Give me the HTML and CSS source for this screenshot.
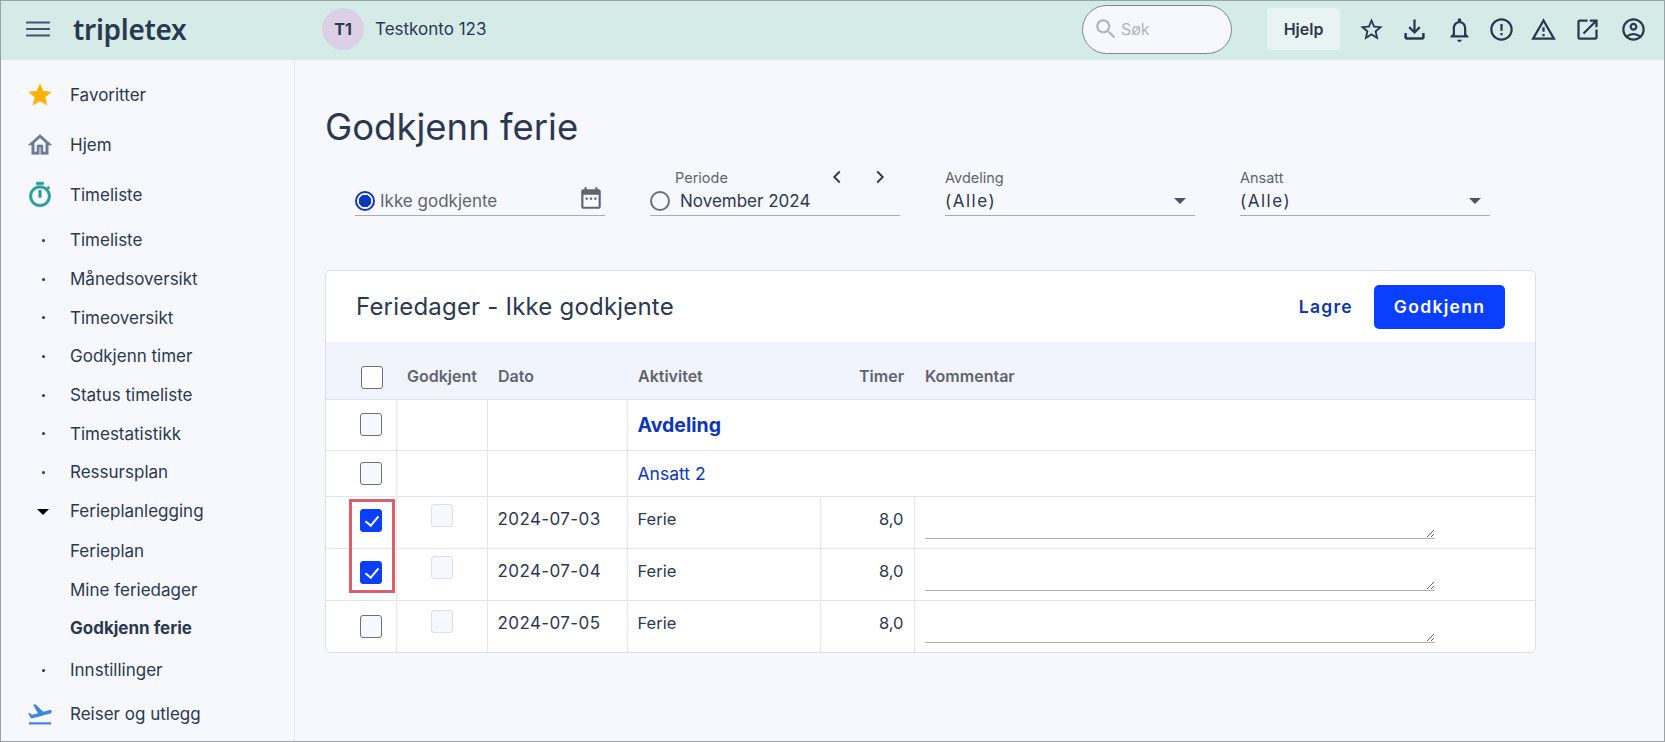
FILE: index.html
```html
<!DOCTYPE html>
<html lang="no">

<head>
    <meta charset="UTF-8">
    <title>Godkjenn ferie</title>
    <link rel="stylesheet" href="styles.css">
</head>

<body>
    <div class="app">
        <header class="topbar">
            <svg class="menu-icon" viewBox="0 0 24 24"><path d="M1 19h22v-2H1v2zm0-6h22v-2H1v2zm0-8v2h22V5H1z"/></svg>
            <span class="logo">tripletex</span>
            <span class="avatar">T1</span>
            <span class="company">Testkonto 123</span>
            <div class="search">
                <svg class="search-icon" viewBox="0 0 24 24"><path d="M15.5 14h-.79l-.28-.27C15.41 12.59 16 11.11 16 9.5 16 5.91 13.09 3 9.5 3S3 5.91 3 9.5 5.91 16 9.5 16c1.61 0 3.09-.59 4.23-1.57l.27.28v.79l5 4.99L20.49 19l-4.99-5zm-6 0C7.01 14 5 11.99 5 9.5S7.01 5 9.5 5 14 7.01 14 9.5 11.99 14 9.5 14z"/></svg>
                <span>Søk</span>
            </div>
            <button class="help">Hjelp</button>
            <div class="tools">
                <svg viewBox="0 0 24 24"><path d="M22 9.24l-7.19-.62L12 2 9.19 8.63 2 9.24l5.46 4.73L5.82 21 12 17.27 18.18 21l-1.63-7.03L22 9.24zM12 15.4l-3.76 2.27 1-4.28-3.32-2.88 4.38-.38L12 6.1l1.71 4.04 4.38.38-3.32 2.88 1 4.28L12 15.4z"/></svg>
                <svg viewBox="0 0 24 24"><path d="M11 3h2v9.2l3-3 1.4 1.4-5.4 5.4-5.4-5.4L8 9.2l3 3V3zM3 15h2.2v3.2c0 .4.3.6.6.6h12.4c.4 0 .6-.2.6-.6V15H21v4c0 1.1-.9 2-2 2H5c-1.100 0-2-.9-2-2v-4z"/></svg>
                <svg viewBox="0 0 24 24"><path d="M12 23c1.100 0 2-.9 2-2h-4c0 1.100.9 2 2 2zm6-7v-5c0-3.070-1.630-5.640-4.500-6.320V3.500c0-.83-.67-1.500-1.500-1.500s-1.500.67-1.500 1.500v1.180C7.640 5.360 6 7.920 6 11v5l-2 2v1h16v-1l-2-2zm-2 1H8v-6c0-2.480 1.510-4.500 4-4.500s4 2.020 4 4.500v6z"/></svg>
                <svg viewBox="0 0 24 24"><path d="M11 15h2v2h-2zm0-8h2v6h-2zm.99-5C6.470 2 2 6.480 2 12s4.470 10 9.990 10C17.520 22 22 17.520 22 12S17.520 2 11.990 2zM12 20c-4.420 0-8-3.580-8-8s3.580-8 8-8 8 3.580 8 8-3.580 8-8 8z"/></svg>
                <svg viewBox="0 0 24 24"><path d="M12 5.990L19.530 19H4.470L12 5.990M12 2L1 21h22L12 2zm1 14h-2v2h2v-2zm0-6h-2v4h2v-4z"/></svg>
                <svg viewBox="0 0 24 24"><path d="M19 19H5V5h7V3H5a2 2 0 0 0-2 2v14a2 2 0 0 0 2 2h14c1.100 0 2-.9 2-2v-7h-2v7zM14 3v2h3.590l-9.830 9.830 1.410 1.410L19 6.410V10h2V3h-7z"/></svg>
                <svg viewBox="0 0 24 24"><path d="M12 2C6.480 2 2 6.480 2 12s4.480 10 10 10 10-4.480 10-10S17.520 2 12 2zM7.350 18.500C8.660 17.560 10.260 17 12 17s3.340.56 4.650 1.500c-1.310.94-2.910 1.500-4.650 1.500s-3.340-.56-4.650-1.500zm10.790-1.380C16.450 15.800 14.320 15 12 15s-4.450.8-6.140 2.120C4.700 15.730 4 13.950 4 12c0-4.420 3.580-8 8-8s8 3.580 8 8c0 1.950-.7 3.730-1.860 5.120zM12 6c-1.930 0-3.500 1.570-3.500 3.500S10.070 13 12 13s3.500-1.570 3.500-3.500S13.930 6 12 6zm0 5c-.83 0-1.500-.67-1.500-1.500S11.170 8 12 8s1.500.67 1.500 1.500S12.830 11 12 11z"/></svg>
            </div>
        </header>

        <div class="layout">
            <nav class="sidebar">
                <a class="nav-top">
                    <svg class="star" viewBox="0 0 24 24"><path d="M12 17.270L18.180 21l-1.640-7.030L22 9.240l-7.190-.61L12 2 9.190 8.630 2 9.240l5.460 4.730L5.820 21z"/></svg>
                    Favoritter
                </a>
                <a class="nav-top">
                    <svg class="home" viewBox="0 0 24 24"><path d="M12 5.690l5 4.500V18h-2.500v-6h-5v6H7v-7.810l5-4.500M12 3L2 12h3v8h6.300v-6h1.400v6H19v-8h3L12 3z"/></svg>
                    Hjem
                </a>
                <a class="nav-top">
                    <svg class="timer" viewBox="0 0 24 24"><path d="M15 1H9v2h6V1zm-4 13h2V8h-2v6zm8.030-6.610l1.420-1.420c-.43-.51-.9-.99-1.410-1.410l-1.420 1.420C16.070 4.740 14.120 4 12 4c-4.970 0-9 4.030-9 9s4.020 9 9 9 9-4.030 9-9c0-2.120-.74-4.070-1.970-5.610zM12 20c-3.870 0-7-3.130-7-7s3.130-7 7-7 7 3.130 7 7-3.130 7-7 7z"/></svg>
                    Timeliste
                </a>
                <a class="nav-sub dot">Timeliste</a>
                <a class="nav-sub dot">Månedsoversikt</a>
                <a class="nav-sub dot">Timeoversikt</a>
                <a class="nav-sub dot">Godkjenn timer</a>
                <a class="nav-sub dot">Status timeliste</a>
                <a class="nav-sub dot">Timestatistikk</a>
                <a class="nav-sub dot">Ressursplan</a>
                <a class="nav-sub caret">Ferieplanlegging</a>
                <a class="nav-sub plan">Ferieplan</a>
                <a class="nav-sub">Mine feriedager</a>
                <a class="nav-sub current">Godkjenn ferie</a>
                <a class="nav-sub dot settings">Innstillinger</a>
                <a class="nav-top">
                    <svg class="plane" viewBox="0 0 24 24"><path d="M2.500 19h19v2h-19v-2zm19.570-9.360c-.21-.8-1.040-1.280-1.840-1.060L14.920 10l-6.900-6.430-1.930.51 4.140 7.170-4.970 1.330-1.970-1.540-1.450.39 2.590 4.490s7.120-1.900 16.570-4.430c.81-.23 1.280-1.050 1.070-1.850z"/></svg>
                    Reiser og utlegg
                </a>
            </nav>

            <main class="content">
                <h1>Godkjenn ferie</h1>

                <div class="filters">
                    <div class="field">
                        <span class="radio checked"></span>
                        <span class="field-muted">Ikke godkjente</span>
                        <svg class="calendar" viewBox="0 0 24 24"><path d="M19 4h-1V2h-2v2H8V2H6v2H5c-1.100 0-2 .9-2 2v14c0 1.100.9 2 2 2h14c1.100 0 2-.9 2-2V6c0-1.100-.9-2-2-2zm0 16H5V9h14v11zM7 11.500h2v2H7zm4 0h2v2h-2zm4 0h2v2h-2z"/></svg>
                    </div>
                    <div class="field">
                        <span class="radio"></span>
                        <span class="period-value">November 2024</span>
                        <span class="field-label period-label">Periode</span>
                        <svg class="chevron prev" viewBox="0 0 24 24"><path d="M15 6l-6 6 6 6"/></svg>
                        <svg class="chevron next" viewBox="0 0 24 24"><path d="M9 6l6 6-6 6"/></svg>
                    </div>
                    <div class="field field-select">
                        <span class="field-label">Avdeling</span>
                        <span class="select-value">(Alle)</span>
                    </div>
                    <div class="field field-select">
                        <span class="field-label">Ansatt</span>
                        <span class="select-value">(Alle)</span>
                    </div>
                </div>

                <section class="card">
                    <div class="card-head">
                        <h2>Feriedager - Ikke godkjente</h2>
                        <div class="card-actions">
                            <button class="btn-link">Lagre</button>
                            <button class="btn-primary">Godkjenn</button>
                        </div>
                    </div>

                    <table class="vacation">
                        <colgroup>
                            <col class="c-check">
                            <col class="c-ok">
                            <col class="c-date">
                            <col class="c-act">
                            <col class="c-hours">
                            <col>
                        </colgroup>
                        <thead>
                            <tr>
                                <th class="cell-check"><span class="box"></span></th>
                                <th>Godkjent</th>
                                <th>Dato</th>
                                <th>Aktivitet</th>
                                <th class="right">Timer</th>
                                <th>Kommentar</th>
                            </tr>
                        </thead>
                        <tbody>
                            <tr class="row-dept">
                                <td class="cell-check"><span class="box"></span></td>
                                <td></td>
                                <td></td>
                                <td colspan="3" class="dept">Avdeling</td>
                            </tr>
                            <tr class="row-emp">
                                <td class="cell-check"><span class="box"></span></td>
                                <td></td>
                                <td></td>
                                <td colspan="3" class="emp">Ansatt 2</td>
                            </tr>
                            <tr class="row-day">
                                <td class="cell-check"><span class="box on"></span></td>
                                <td class="cell-ok"><span class="box off"></span></td>
                                <td class="cell-date">2024-07-03</td>
                                <td>Ferie</td>
                                <td class="right">8,0</td>
                                <td class="cell-note"><textarea></textarea></td>
                            </tr>
                            <tr class="row-day">
                                <td class="cell-check"><span class="box on"></span></td>
                                <td class="cell-ok"><span class="box off"></span></td>
                                <td class="cell-date">2024-07-04</td>
                                <td>Ferie</td>
                                <td class="right">8,0</td>
                                <td class="cell-note"><textarea></textarea></td>
                            </tr>
                            <tr class="row-day">
                                <td class="cell-check"><span class="box"></span></td>
                                <td class="cell-ok"><span class="box off"></span></td>
                                <td class="cell-date">2024-07-05</td>
                                <td>Ferie</td>
                                <td class="right">8,0</td>
                                <td class="cell-note"><textarea></textarea></td>
                            </tr>
                        </tbody>
                    </table>
                    <div class="highlight"></div>
                </section>
            </main>
        </div>
    </div>
</body>

</html>
```

FILE: styles.css
```css
* {
    box-sizing: border-box;
}

html,
body {
    margin: 0;
    padding: 0;
    height: 100%;
    overflow: hidden;
    font-family: Inter, 'Liberation Sans', sans-serif;
    font-size: 16px;
    color: #2b3850;
}

svg {
    display: block;
    fill: currentColor;
}

.app {
    height: 742px;
    display: flex;
    flex-direction: column;
    border: 1px solid #98a3a6;
    background-color: #f7f8fd;
    overflow: hidden;
}

/* top bar */
.topbar {
    flex: none;
    height: 59px;
    display: flex;
    align-items: center;
    padding-bottom: 3px;
    background-color: #d5ebe8;
}

.menu-icon {
    width: 26px;
    height: 26px;
    margin-left: 24px;
    color: #46536a;
}

.logo {
    margin-left: 22px;
    width: 114px;
    font-family: 'Noto Sans', sans-serif;
    font-size: 28px;
    font-weight: 600;
    letter-spacing: -0.3px;
    color: #2b3850;
}

.avatar {
    width: 42px;
    height: 42px;
    margin-left: 135px;
    display: flex;
    align-items: center;
    justify-content: center;
    border-radius: 50%;
    background-color: #dcd0e6;
    font-weight: 700;
    font-size: 16px;
}

.company {
    margin-left: 11px;
    font-size: 17px;
}

.search {
    margin-left: auto;
    width: 150px;
    height: 49px;
    display: flex;
    align-items: center;
    gap: 2px;
    padding-left: 10px;
    border: 1px solid #7d878c;
    border-radius: 25px;
    background-color: #f7f8fd;
    color: #b2b5c0;
    font-size: 16px;
}

.search-icon {
    width: 26px;
    height: 26px;
}

.help {
    margin-left: 35px;
    width: 73px;
    height: 42px;
    border: 0;
    border-radius: 4px;
    background-color: #e8f4f3;
    color: #2b3850;
    font-family: Inter, sans-serif;
    font-size: 16px;
    font-weight: 600;
}

.tools {
    display: flex;
    gap: 16px;
    margin-left: 18px;
    margin-right: 17px;
}

.tools svg {
    width: 27px;
    height: 27px;
}

.tools svg:nth-child(3) {
    margin-left: 2px;
}

.tools svg:nth-child(4),
.tools svg:nth-child(5) {
    margin-left: -1px;
}

.tools svg:nth-child(6) {
    margin-left: 1px;
}

.tools svg:nth-child(7) {
    margin-left: 3px;
}

/* sidebar */
.layout {
    flex: 1;
    display: flex;
    min-height: 0;
}

.sidebar {
    flex: none;
    width: 294px;
    padding-top: 10px;
    border-right: 1px solid #e6e8ef;
    overflow: hidden;
    font-size: 17px;
}

.nav-top,
.nav-sub {
    position: relative;
    display: flex;
    align-items: center;
    padding-left: 69px;
}

.nav-top {
    height: 50px;
}

.nav-top svg {
    position: absolute;
    left: 25px;
    top: 11px;
    width: 28px;
    height: 28px;
}

.nav-sub {
    height: 38.700px;
}

.nav-top + .nav-sub {
    margin-top: 1px;
}

.nav-sub.current {
    font-weight: 700;
}

.plan {
    margin-top: 1px;
}

.settings {
    margin-top: 3px;
}

.dot::before {
    content: "";
    position: absolute;
    left: 41px;
    top: 18px;
    width: 3px;
    height: 3px;
    border-radius: 50%;
    background-color: #2b3850;
}

.caret::before {
    content: "";
    position: absolute;
    left: 36px;
    top: 17px;
    border-left: 6.500px solid transparent;
    border-right: 6.500px solid transparent;
    border-top: 6.500px solid #000;
}

.star {
    color: #ffb000;
}

.home {
    color: #6b7c93;
    stroke: currentColor;
    stroke-width: 0.5;
}

.timer {
    color: #2b9c9c;
    stroke: currentColor;
    stroke-width: 0.6;
}

.plane {
    color: #3f86de;
}

/* main content */
.content {
    flex: 1;
    min-width: 0;
    padding: 42px 0 0 30px;
}

h1 {
    margin: 0;
    font-size: 36.500px;
    font-weight: 400;
    line-height: 50px;
}

.filters {
    display: flex;
    gap: 45px;
    margin: 16px 0 0 30px;
}

.field {
    position: relative;
    width: 250px;
    height: 48px;
    display: flex;
    align-items: flex-end;
    padding-bottom: 4px;
    border-bottom: 1px solid #a8acb5;
    font-size: 17px;
}

.field-muted {
    margin-left: 5px;
    color: #5f6470;
}

.field-label {
    position: absolute;
    left: 0;
    top: 1px;
    font-size: 14.500px;
    color: #5f6470;
}

.period-label {
    left: 25px;
}

.period-value {
    margin-left: 10px;
}

.radio {
    flex: none;
    width: 20px;
    height: 20px;
    border: 2px solid #6d7078;
    border-radius: 50%;
}

.radio.checked {
    border-color: #0d36b8;
    background: radial-gradient(circle, #0d36b8 0 6px, transparent 6.500px);
}

.calendar {
    margin-left: auto;
    margin-right: 1px;
    width: 26px;
    height: 26px;
    color: #5f6470;
}

.chevron {
    position: absolute;
    top: -2px;
    width: 22px;
    height: 22px;
    fill: none;
    stroke: #2b3850;
    stroke-width: 2;
}

.prev {
    left: 176px;
}

.next {
    left: 219px;
}

.select-value {
    letter-spacing: 1.500px;
}

.field-select::after {
    content: "";
    position: absolute;
    right: 9px;
    bottom: 11px;
    border-left: 6.500px solid transparent;
    border-right: 6.500px solid transparent;
    border-top: 6.500px solid #46536a;
}

/* card */
.card {
    position: relative;
    width: 1211px;
    margin-top: 54px;
    background-color: #fff;
    border: 1px solid #dcdfe6;
    border-radius: 5px;
    overflow: hidden;
}

.card-head {
    height: 71px;
    display: flex;
    align-items: center;
    justify-content: space-between;
    padding: 0 30px 0 30px;
}

h2 {
    margin: 0;
    font-size: 24px;
    font-weight: 400;
    letter-spacing: 0.2px;
}

.card-actions {
    display: flex;
    align-items: center;
    gap: 21px;
}

.btn-link,
.btn-primary {
    border: 0;
    font-family: Inter, sans-serif;
    font-size: 17.500px;
    font-weight: 600;
    letter-spacing: 1.300px;
}

.btn-link {
    background: none;
    padding: 0;
    color: #0d36a8;
}

.btn-primary {
    width: 131px;
    height: 44px;
    border-radius: 5px;
    background-color: #0a3fff;
    color: #fff;
}

.vacation {
    width: 100%;
    border-collapse: collapse;
    table-layout: fixed;
    font-size: 16.500px;
}

.c-check {
    width: 70px;
}

.c-ok {
    width: 91px;
}

.c-date {
    width: 140px;
}

.c-act {
    width: 193px;
}

.c-hours {
    width: 94px;
}

.vacation th,
.vacation td {
    padding: 0 10px;
    text-align: left;
    vertical-align: middle;
}

.vacation thead tr {
    height: 57px;
    background-color: #f2f4fd;
}

.vacation thead th {
    font-size: 16px;
    font-weight: 600;
    color: #5f6470;
    padding-top: 11px;
    padding-left: 11px;
    white-space: nowrap;
    border-bottom: 1px solid #dfe2e9;
}

.vacation tbody td {
    border-left: 1px solid #e3e5ea;
    border-bottom: 1px solid #e3e5ea;
}

.vacation tbody td:first-child {
    border-left: 0;
}

.vacation tbody tr:last-child td {
    border-bottom: 0;
}

.vacation .right {
    text-align: right;
}

.row-dept {
    height: 51px;
}

.row-emp {
    height: 46px;
}

.row-day {
    height: 52px;
}

.vacation .row-day td {
    padding-bottom: 6px;
}

.vacation .cell-date {
    font-size: 17px;
    letter-spacing: 0.4px;
}

.dept {
    font-size: 19.500px;
    font-weight: 700;
    color: #0d36b8;
}

.emp {
    font-size: 17.500px;
    color: #0d36b8;
}

.vacation .cell-check {
    padding: 0 0 0 34px;
}

.vacation .row-day .cell-check {
    padding: 0 0 4px 34px;
}

.vacation .row-day:last-child .cell-check {
    padding-bottom: 0;
}

.vacation .row-day .cell-ok {
    padding: 0 0 14px 34px;
}

.vacation .row-day:last-child .cell-ok {
    padding-bottom: 10px;
}

.vacation .row-day .cell-note {
    padding-bottom: 3px;
}

.box {
    display: block;
    width: 22px;
    height: 23px;
    border: 1px solid #6d7078;
    border-radius: 3px;
    background-color: #f7f8fd;
}

thead .box {
    background-color: #fff;
    margin: 15px 0 0 1px;
}

.box.off {
    border-color: #dcdfe6;
}

.box.on {
    position: relative;
    border-color: #0a3fff;
    background-color: #0a3fff;
}

.box.on::after {
    content: "";
    position: absolute;
    left: 7px;
    top: 3px;
    width: 6px;
    height: 11px;
    border: solid #fff;
    border-width: 0 2px 2px 0;
    transform: rotate(40deg);
}

textarea {
    display: block;
    width: 510px;
    height: 36px;
    padding: 0;
    border: 0;
    border-bottom: 1px solid #b0b3ba;
    background: none;
    outline: none;
    font-family: Inter, sans-serif;
}

.highlight {
    position: absolute;
    left: 23px;
    top: 228px;
    width: 46px;
    height: 94px;
    border: 3px solid #d9606a;
    pointer-events: none;
}
```
